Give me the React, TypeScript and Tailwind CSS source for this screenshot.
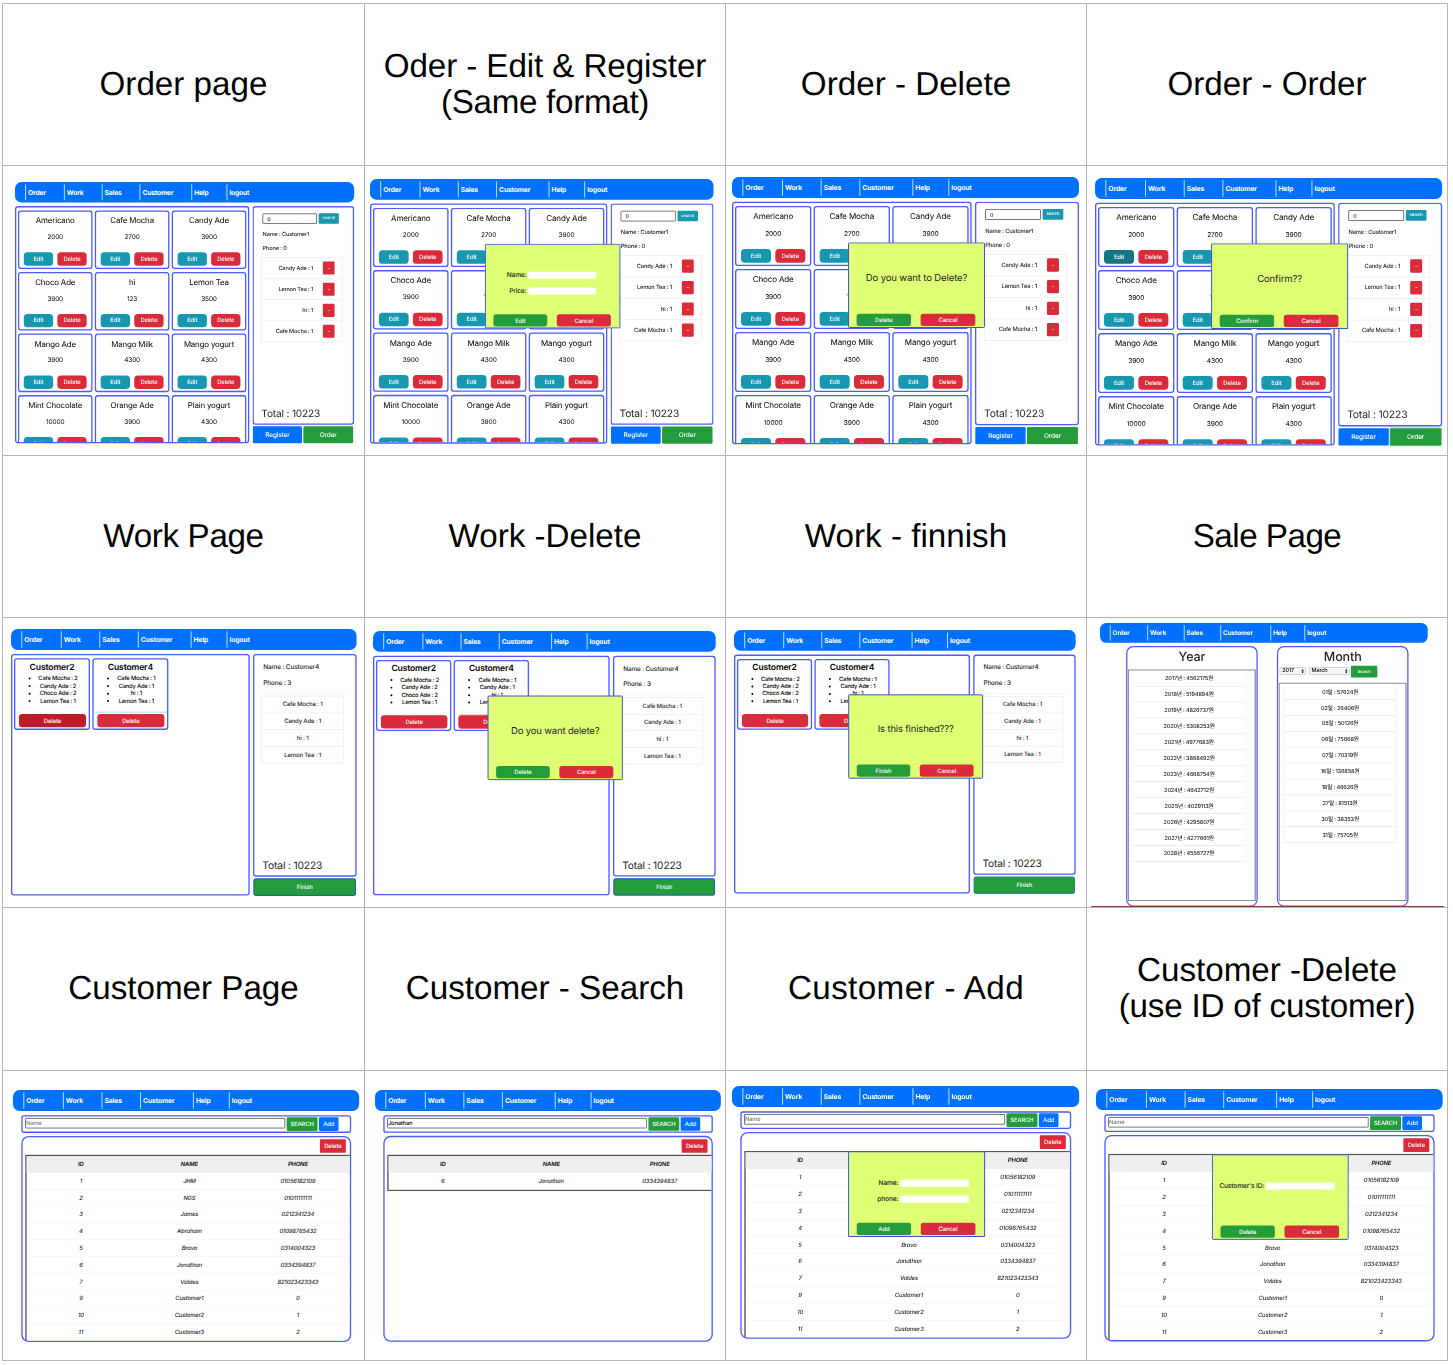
import type { ReactNode } from "react";

const NAV = [
  { label: "Order", width: "w-[119px]" },
  { label: "Work", width: "w-[116px]" },
  { label: "Sales", width: "w-[116px]" },
  { label: "Customer", width: "w-[159px]" },
  { label: "Help", width: "w-[108px]" },
  { label: "logout", width: "w-[120px]" },
];

const MENU: [string, string][] = [
  ["Americano", "2000"],
  ["Cafe Mocha", "2700"],
  ["Candy Ade", "3900"],
  ["Choco Ade", "3900"],
  ["hi", "123"],
  ["Lemon Tea", "3500"],
  ["Mango Ade", "3900"],
  ["Mango Milk", "4300"],
  ["Mango yogurt", "4300"],
  ["Mint Chocolate", "10000"],
  ["Orange Ade", "3900"],
  ["Plain yogurt", "4300"],
];

const CUSTOMERS: [string, string, string][] = [
  ["1", "JHM", "01056182109"],
  ["2", "NGS", "01011111111"],
  ["3", "James", "0212341234"],
  ["4", "Abraham", "01098765432"],
  ["5", "Bravo", "0314004323"],
  ["6", "Jonathan", "0334394837"],
  ["7", "Valdes", "821023423343"],
  ["9", "Customer1", "0"],
  ["10", "Customer2", "1"],
  ["11", "Customer3", "2"],
];

const YEARS = [
  "2017년 : 4562175원",
  "2018년 : 5194894원",
  "2019년 : 4826737원",
  "2020년 : 5308253원",
  "2021년 : 4977683원",
  "2022년 : 3868492원",
  "2023년 : 4668754원",
  "2024년 : 4642712원",
  "2025년 : 4029113원",
  "2026년 : 4295807원",
  "2027년 : 4277661원",
  "2028년 : 4556727원",
];

const DAYS = [
  "01일 : 57624원",
  "02일 : 26406원",
  "05일 : 50126원",
  "06일 : 75668원",
  "07일 : 70319원",
  "16일 : 136858원",
  "18일 : 46626원",
  "27일 : 81513원",
  "30일 : 38353원",
  "31일 : 75705원",
];

function Title({ tracking = "", children }: { tracking?: string; children: ReactNode }) {
  return (
    <div className="flex items-center justify-center border-r border-b border-[#b5b5b5] text-center font-['Liberation_Sans',sans-serif] text-[33.2px] leading-9 whitespace-nowrap text-black [text-rendering:geometricPrecision]">
      <h2 className={tracking}>{children}</h2>
    </div>
  );
}

/* A page preview: the page is laid out 1041 units wide and scaled into its cell. */
function Preview({ pad, scale, children }: { pad: string; scale: string; children: ReactNode }) {
  return (
    <div className={`min-w-0 overflow-hidden border-r border-b border-[#b5b5b5] ${pad}`}>
      <div className={`relative flex h-[905px] w-[1041px] origin-top-left flex-col font-[Inter,'Noto_Sans_CJK_KR',sans-serif] font-medium tracking-[-0.03em] text-[#212529] [text-rendering:geometricPrecision] ${scale}`}>
        <nav className="flex h-[63px] shrink-0 items-center rounded-[20px] bg-[#0070ff] pl-[31px]">
          {NAV.map((n) => (
            <div key={n.label} className={`flex h-[49px] shrink-0 items-center border-l-[3px] border-[#c4dcff] pt-[2px] pl-[6px] text-[20.5px] font-bold text-white ${n.width}`}>
              {n.label}
            </div>
          ))}
        </nav>
        {children}
      </div>
    </div>
  );
}

function Modal({ ok, children }: { ok: string; children: ReactNode }) {
  return (
    <div className="absolute top-[196px] left-[348px] flex h-[257px] w-[411px] flex-col rounded-[4px] border-[3px] border-[#3c50d2] bg-[#dfff75]">
      <div className="h-[211px]">{children}</div>
      <div className="flex gap-[29px] pl-[23px] text-[18px] text-white">
        <div className="flex h-[37px] w-[163px] items-center justify-center rounded-[8px] bg-[#249c3c] pt-[2px]">{ok}</div>
        <div className="flex h-[37px] w-[164px] items-center justify-center rounded-[8px] bg-[#d92b3a] pt-[2px]">Cancel</div>
      </div>
    </div>
  );
}

function Message({ children }: { children: ReactNode }) {
  return <p className="pt-[84px] text-center text-[28.8px] leading-[38px] font-normal">{children}</p>;
}

function Field({ label, end }: { label: string; end: string }) {
  return (
    <div className={`flex h-[48px] items-center justify-end gap-[6px] text-[20px] ${end}`}>
      <span>{label}</span>
      <span className="h-[21px] w-[205px] bg-white" />
    </div>
  );
}

function OrderPage({ editPressed = false, focusOrder = false }: { editPressed?: boolean; focusOrder?: boolean }) {
  const cart = ["Candy Ade : 1", "Lemon Tea : 1", "hi : 1", "Cafe Mocha : 1"];
  return (
    <div className="flex gap-[10px] pt-[11px]">
      <div className="grid h-[728px] w-[719px] grid-cols-[229px_229px_229px] content-start gap-x-[7px] gap-y-[9px] overflow-hidden rounded-[9px] border-[4px] border-[#4a5cff] pt-[9px] pl-[5px]">
        {MENU.map(([name, price], i) => (
          <div key={name} className="flex h-[180px] flex-col items-center rounded-[9px] border-[4px] border-[#4a5cff] text-black">
            <div className="pt-[12px] text-[24.2px] leading-[32px] font-normal whitespace-nowrap">{name}</div>
            <div className="pt-[19px] text-[20px] leading-[30px] font-normal">{price}</div>
            <div className="flex gap-[13px] pt-[32px] text-[18px] text-white">
              <div className={`flex h-[41px] w-[90px] items-center justify-center rounded-[11px] ${editPressed && i === 0 ? "bg-[#127585]" : "bg-[#1797b0]"}`}>Edit</div>
              <div className="flex h-[41px] w-[90px] items-center justify-center rounded-[11px] bg-[#d92b3a]">Delete</div>
            </div>
          </div>
        ))}
      </div>
      <div className="flex w-[312px] flex-col">
        <div className="flex h-[671px] flex-col rounded-[9px] border-[4px] border-[#4a5cff] pl-[26px]">
          <div className="flex gap-[5px] pt-[18px]">
            <div className="flex h-[33px] w-[168px] items-center rounded-[3px] border-[3px] border-[#777] pl-[12px] text-[16px]">0</div>
            <div className="flex h-[32px] w-[62px] items-center justify-center rounded-[3px] bg-[#1797b0] text-[13px] text-white">search</div>
          </div>
          <div className="pt-[22px] pl-[1px] text-[17.3px] leading-[22px]">Name : Customer1</div>
          <div className="pt-[20px] pl-[1px] text-[17.3px] leading-[22px]">Phone : 0</div>
          <div className="mt-[16px] -ml-[3px] w-[249px] border-2 border-b-0 border-[#eaeaea]">
            {cart.map((c) => (
              <div key={c} className="flex h-[64.7px] items-center justify-end gap-[30px] border-b-2 border-[#eaeaea] pr-[22px] text-[17.3px]">
                <span>{c}</span>
                <span className="flex h-[40px] w-[36px] items-center justify-center rounded-[4px] bg-[#d92b3a] text-white">-</span>
              </div>
            ))}
          </div>
          <div className="mt-auto pb-[12px] -ml-[3px] text-[31px] leading-[38px] font-normal">Total : 10223</div>
        </div>
        <div className="flex gap-[4px] pt-[5px] pl-[1px] text-[19.8px] text-white">
          <div className="flex h-[52px] w-[151px] items-center justify-center rounded-[4px] bg-[#0070ff]">Register</div>
          <div className={`flex h-[52px] w-[153px] items-center justify-center rounded-[4px] bg-[#249c3c] ${focusOrder ? "ring-2 ring-[#7fd08f]" : ""}`}>Order</div>
        </div>
      </div>
    </div>
  );
}

function WorkCard({ name, items, button, strip }: { name: string; items: string[]; button: string; strip?: boolean }) {
  return (
    <div className="flex h-[216px] w-[229px] flex-col rounded-[9px] border-[4px] border-[#4a5cff] text-black">
      <div className="pt-[6px] text-center text-[26px] leading-[34px] font-semibold">{name}</div>
      <ul className="pt-[6px] text-[17.3px] leading-[22.7px]">
        {items.map((t) => (
          <li key={t} className="flex items-center pl-[40px]">
            <span className="h-[6px] w-[6px] rounded-full bg-black" />
            <span className="flex-1 pr-[10px] text-center">{t}</span>
          </li>
        ))}
      </ul>
      <div className={`mt-auto border-t-[3px] pt-[4px] pb-[4px] pl-[11px] ${strip ? "border-[#b9d8ff]" : "border-transparent"}`}>
        <div className={`flex h-[40px] w-[202px] items-center justify-center rounded-[10px] text-[18px] text-white ${button}`}>Delete</div>
      </div>
    </div>
  );
}

function WorkPage({ first = "bg-[#d92b3a]", second = "bg-[#d92b3a]", strip = false, finish }: { first?: string; second?: string; strip?: boolean; finish: string }) {
  const queue = ["Cafe Mocha : 1", "Candy Ade : 1", "hi : 1", "Lemon Tea : 1"];
  return (
    <div className="flex gap-[10px] pt-[12px]">
      <div className="flex h-[728px] w-[719px] items-start gap-[7px] rounded-[9px] border-[4px] border-[#4a5cff] pt-[9px] pl-[5px]">
        <WorkCard name="Customer2" items={["Cafe Mocha : 2", "Candy Ade : 2", "Choco Ade : 2", "Lemon Tea : 1"]} button={first} />
        <WorkCard name="Customer4" items={queue} button={second} strip={strip} />
      </div>
      <div className="flex w-[312px] flex-col">
        <div className="flex h-[671px] flex-col rounded-[9px] border-[4px] border-[#4a5cff] pl-[27px]">
          <div className="pt-[20px] text-[19.6px] leading-[28px]">Name : Customer4</div>
          <div className="pt-[20px] text-[19.6px] leading-[28px]">Phone : 3</div>
          <div className="mt-[18px] w-[252px] border-t-2 border-[#f2f2f2]" />
          <div className="mt-[6px] -ml-[6px] w-[249px] border-2 border-b-0 border-[#eaeaea]">
            {queue.map((q) => (
              <div key={q} className="flex h-[50.5px] items-center justify-center border-b-2 border-[#eaeaea] pt-[1px] text-[18px]">
                {q}
              </div>
            ))}
          </div>
          <div className="mt-auto pb-[10px] -ml-[3px] text-[31px] leading-[38px] font-normal">Total : 10223</div>
        </div>
        <div className={`mt-[5px] ml-[1px] flex h-[53px] w-[309px] items-center justify-center rounded-[6px] border-[3px] bg-[#249c3c] pt-[2px] text-[18px] text-white ${finish}`}>Finish</div>
      </div>
    </div>
  );
}

function SalesList({ rows, className }: { rows: string[]; className: string }) {
  return (
    <div className={`border-2 border-t-0 border-b-0 border-[#ececec] ${className}`}>
      {rows.map((r) => (
        <div key={r} className="flex h-[50.6px] items-center justify-center border-b-2 border-[#e6e6e6] pt-[4px] text-[17.8px] whitespace-pre">
          {r}
        </div>
      ))}
    </div>
  );
}

function Select({ value, width }: { value: string; width: string }) {
  return (
    <div className={`flex h-[25px] items-center justify-between rounded-[4px] border-[3px] border-[#d0d0d0] bg-[#f6f6f6] pr-[4px] pl-[6px] text-[17.5px] text-black ${width}`}>
      <span>{value}</span>
      <svg viewBox="0 0 10 16" className="h-[16px] w-[9px]" fill="#111">
        <path d="M5 0 L9.5 6.5 H0.5 Z M5 16 L0.5 9.5 H9.5 Z" />
      </svg>
    </div>
  );
}

function SalePage() {
  return (
    <>
      <div className="flex gap-[61px] pt-[10px] pl-[83px]">
        <section className="flex h-[828px] w-[418px] flex-col rounded-[22px] border-[4px] border-[#4a5cff] px-[2px]">
          <h3 className="pt-[6px] text-center text-[40px] leading-[48px] font-medium">Year</h3>
          <div className="mt-[17px] h-[735px] border-[3px] border-r-[4px] border-[#8c8c8c] pl-[9px]">
            <SalesList rows={YEARS} className="w-[364px]" />
          </div>
        </section>
        <section className="flex h-[828px] w-[418px] flex-col rounded-[22px] border-[4px] border-[#4a5cff] px-[2px]">
          <h3 className="pt-[6px] text-center text-[40px] leading-[48px] font-medium">Month</h3>
          <div className="flex h-[59px] items-start gap-[8px] pt-[9px] pl-[2px]">
            <Select value="2017" width="w-[85px]" />
            <Select value="March" width="w-[131px]" />
            <div className="-mt-[4px] -ml-[5px] flex h-[37px] w-[84px] items-center justify-center rounded-[3px] bg-[#249c3c] text-[13.3px] text-white">Search</div>
          </div>
          <div className="h-[693px] border-[3px] border-r-[4px] border-[#8c8c8c] pl-[11px]">
            <SalesList rows={DAYS} className="w-[361px]" />
          </div>
        </section>
      </div>
      <div className="absolute top-[899px] -left-[28px] h-[4px] w-[1121px] bg-[#97313b]" />
    </>
  );
}

function CustomerPage({ query, rows = CUSTOMERS }: { query?: string; rows?: [string, string, string][] }) {
  return (
    <div className="flex flex-col pl-[25px]">
      <div className="mt-[13px] flex h-[53px] w-[992px] items-start rounded-[8px] border-[4px] border-[#4a5cff] pt-[2px] pl-[7px] text-white">
        <div className={`mt-[2px] flex h-[32px] w-[783px] items-center rounded-[3px] border-[3px] border-[#777] text-[17.3px] ${query ? "text-black" : "text-[#777]"}`}>{query ?? "Name"}</div>
        <div className="ml-[4px] flex h-[41px] w-[93px] items-center justify-center rounded-[4px] bg-[#249c3c] text-[17.8px]">SEARCH</div>
        <div className="ml-[4px] flex h-[41px] w-[59px] items-center justify-center rounded-[4px] bg-[#0070ff] text-[18px]">Add</div>
      </div>
      <div className="mt-[9px] h-[620px] w-[992px] overflow-hidden rounded-[22px] border-[4px] border-[#4a5cff] pl-[8px]">
        <div className="flex h-[53px] justify-end pt-[6px] pr-[12px]">
          <div className="flex h-[41px] w-[78px] items-center justify-center rounded-[3px] bg-[#d92b3a] text-[18px] text-white">Delete</div>
        </div>
        <div className="w-[987px] border-[4px] border-[#505050] text-[17.5px] italic">
          <div className="grid h-[50px] grid-cols-3 items-center bg-[#efefef] text-center font-bold">
            <span>ID</span>
            <span>NAME</span>
            <span>PHONE</span>
          </div>
          {rows.map(([id, name, phone]) => (
            <div key={id} className="grid h-[50.6px] grid-cols-3 items-center border-b-2 border-[#f4f4f4] pt-[2px] text-center">
              <span>{id}</span>
              <span>{name}</span>
              <span>{phone}</span>
            </div>
          ))}
        </div>
      </div>
    </div>
  );
}

export default function App() {
  return (
    <div className="h-[1365px] w-[1453px] overflow-hidden bg-white pt-[3px] pl-[2px]">
      <div className="grid w-[1446px] grid-cols-[362px_361px_361px_361px] grid-rows-[162px_290px_162px_290px_163px_290px] border-t border-l border-[#b5b5b5]">
        <Title>Order page</Title>
        <Title tracking="tracking-[-0.1px]">
          Oder - Edit &amp; Register
          <br />
          <span className="tracking-[-0.3px]">(Same format)</span>
        </Title>
        <Title>Order - Delete</Title>
        <Title>Order - Order</Title>

        <Preview pad="pt-[16.33px] pl-[11.67px]" scale="scale-[0.3258]">
          <OrderPage />
        </Preview>
        <Preview pad="pt-[13px] pl-[5px]" scale="scale-[0.33]">
          <OrderPage />
          <Modal ok="Edit">
            <div className="pt-[68px]">
              <Field label="Name:" end="pr-[71px]" />
              <Field label="Price:" end="pr-[71px]" />
            </div>
          </Modal>
        </Preview>
        <Preview pad="pt-[11px] pl-[6.33px]" scale="scale-[0.3333]">
          <OrderPage />
          <Modal ok="Delete">
            <Message>Do you want to Delete?</Message>
          </Modal>
        </Preview>
        <Preview pad="pt-[12px] pl-[8.33px]" scale="scale-[0.3335]">
          <OrderPage editPressed focusOrder />
          <Modal ok="Confirm">
            <Message>Confirm??</Message>
          </Modal>
        </Preview>

        <Title tracking="tracking-[-0.35px]">Work Page</Title>
        <Title>Work -Delete</Title>
        <Title>Work - finnish</Title>
        <Title tracking="tracking-[-0.5px]">Sale Page</Title>

        <Preview pad="pt-[11.33px] pl-[8px]" scale="scale-[0.332]">
          <WorkPage first="bg-[#bf1c2a]" strip finish="border-[#1b56b8]" />
        </Preview>
        <Preview pad="pt-[13px] pl-[8px]" scale="scale-[0.3292]">
          <WorkPage second="bg-[#d92b3a] ring-2 ring-[#f0a0a8]" finish="border-[#1b56b8]" />
          <Modal ok="Delete">
            <Message>Do you want delete?</Message>
          </Modal>
        </Preview>
        <Preview pad="pt-[12.33px] pl-[8px]" scale="scale-[0.3282]">
          <WorkPage finish="border-[#23868a]" />
          <Modal ok="Finish">
            <Message>Is this finished???</Message>
          </Modal>
        </Preview>
        <Preview pad="pt-[4.67px] pl-[13px]" scale="scale-[0.3148]">
          <SalePage />
        </Preview>

        <Title>Customer Page</Title>
        <Title>Customer - Search</Title>
        <Title tracking="tracking-[0.4px]">Customer - Add</Title>
        <Title>
          Customer -Delete
          <br />
          <span className="tracking-[-0.2px]">(use ID of customer)</span>
        </Title>

        <Preview pad="pt-[19px] pl-[10.33px]" scale="scale-[0.3325]">
          <CustomerPage />
        </Preview>
        <Preview pad="pt-[18.67px] pl-[10px]" scale="scale-[0.3322]">
          <CustomerPage query="Jonathan" rows={[["6", "Jonathan", "0334394837"]]} />
        </Preview>
        <Preview pad="pt-[15px] pl-[6px]" scale="scale-[0.3335]">
          <CustomerPage />
          <Modal ok="Add">
            <div className="pt-[68px]">
              <Field label="Name:" end="pr-[46px]" />
              <Field label="phone:" end="pr-[46px]" />
            </div>
          </Modal>
        </Preview>
        <Preview pad="pt-[18px] pl-[9px]" scale="scale-[0.333]">
          <CustomerPage />
          <Modal ok="Delete">
            <div className="pt-[68px]">
              <Field label="Customer's ID:" end="pr-[40px]" />
            </div>
          </Modal>
        </Preview>
      </div>
    </div>
  );
}
